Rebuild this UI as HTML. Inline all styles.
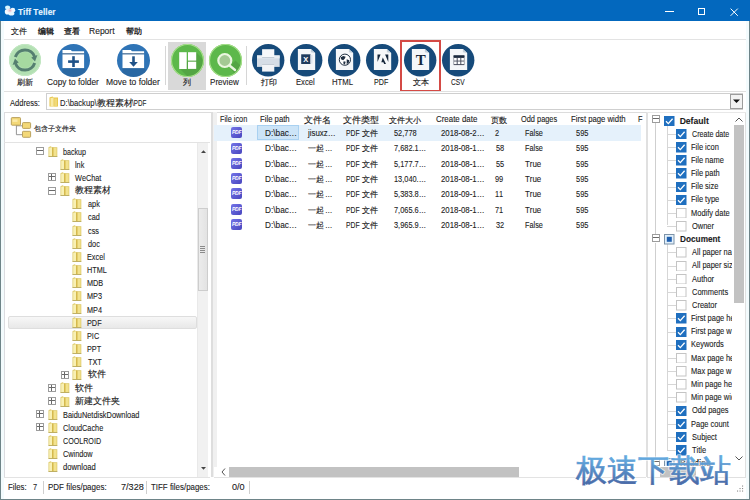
<!DOCTYPE html><html><head><meta charset="utf-8"><style>
*{margin:0;padding:0;box-sizing:border-box}
html,body{width:750px;height:500px;overflow:hidden;background:#fff;font-family:"Liberation Sans",sans-serif}
.ab{position:absolute}
.t{position:absolute;white-space:nowrap;line-height:10px;transform-origin:0 0;font-kerning:none;-webkit-text-stroke:0.1px currentColor}
</style></head><body>
<div class="ab" style="left:0;top:0;width:750px;height:21px;background:#0368be"></div>
<svg class="ab" style="left:4px;top:5px" width="12" height="11" viewBox="0 0 12 11"><ellipse cx="3.6" cy="2.6" rx="2.6" ry="2" fill="#d8f6ff"/><ellipse cx="8.8" cy="5.2" rx="2.4" ry="2.4" fill="#eef8ff"/><ellipse cx="3.4" cy="6.8" rx="2.6" ry="2.8" fill="#f4fbff"/><ellipse cx="7.4" cy="8.4" rx="3" ry="2" fill="#e6f8ff"/><ellipse cx="5.8" cy="5.4" rx="2.4" ry="2" fill="#f2dfe8"/><ellipse cx="6" cy="5.6" rx="1.2" ry="1" fill="#e3b9c8"/></svg>
<div class="t" style="left:18.32px;top:7px;font-size:8.6px;font-weight:bold;color:#e6f5ff;transform:scaleX(0.970);">Tiff Teller</div>
<div class="ab" style="left:665px;top:11px;width:9px;height:1px;background:#fff"></div>
<div class="ab" style="left:698px;top:8px;width:7px;height:7px;border:1px solid #fff"></div>
<svg class="ab" style="left:729.5px;top:7.5px" width="9" height="9" viewBox="0 0 9 9"><path d="M0.6 0.6 L7.8 7.8 M7.8 0.6 L0.6 7.8" stroke="#fff" stroke-width="1"/></svg>
<div class="ab" style="left:0;top:21px;width:1px;height:479px;background:#6e8488"></div>
<div class="ab" style="left:1px;top:21px;width:3px;height:478px;background:#f3fbfd"></div>
<div class="ab" style="left:746px;top:21px;width:3px;height:478px;background:#f3fbfd"></div>
<div class="ab" style="left:749px;top:21px;width:1px;height:479px;background:#6e8488"></div>
<div class="ab" style="left:0;top:499px;width:750px;height:1px;background:#6e8488"></div>
<div class="t" style="left:11.2px;top:27px;font-size:7.9px;color:#1c1c1c;-webkit-text-stroke:0.15px #1c1c1c;">文件</div>
<div class="t" style="left:37.5px;top:27px;font-size:8.1px;color:#1c1c1c;-webkit-text-stroke:0.15px #1c1c1c;-webkit-text-stroke:0.32px #1c1c1c">编辑</div>
<div class="t" style="left:64.2px;top:27px;font-size:7.9px;color:#1c1c1c;-webkit-text-stroke:0.15px #1c1c1c;-webkit-text-stroke:0.32px #1c1c1c">查看</div>
<div class="t" style="left:89.32px;top:26px;font-size:8.6px;color:#1c1c1c;transform:scaleX(0.990);">Report</div>
<div class="t" style="left:126px;top:27px;font-size:7.8px;color:#1c1c1c;-webkit-text-stroke:0.15px #1c1c1c;-webkit-text-stroke:0.32px #1c1c1c">帮助</div>
<div class="ab" style="left:4px;top:39px;width:742px;height:1px;background:#e3e3e3"></div>
<div class="ab" style="left:165px;top:46px;width:1px;height:39px;background:#d6d6d6"></div>
<div class="ab" style="left:245.5px;top:46px;width:1px;height:39px;background:#d6d6d6"></div>
<div class="ab" style="left:168px;top:42px;width:38px;height:48px;background:#d9d9d9"></div>
<div class="ab" style="left:400px;top:40px;width:41px;height:52px;border:2px solid #d44a45"></div>
<svg class="ab" style="left:7.800000000000001px;top:42.8px" width="34" height="34" viewBox="-17 -17 34 34"><defs><clipPath id="cc1"><circle cx="0" cy="0" r="16"/></clipPath></defs><circle cx="0" cy="0" r="16" fill="#b3e0b3"/><circle r="15.6" fill="#b3e0b3" stroke="#c6e9c6" stroke-width="0.8"/><circle r="8" fill="#a6d9a0"/><path d="M-9.66 -2.95 A10.1 10.1 0 0 1 9.61 -3.12" fill="none" stroke="#557f70" stroke-width="3.0"/><path d="M9.66 2.95 A10.1 10.1 0 0 1 -9.61 3.12" fill="none" stroke="#557f70" stroke-width="3.0"/><path d="M12.42 -5.02 L6.30 -2.55 L10.00 1.41Z" fill="#557f70"/><path d="M-12.42 5.02 L-6.30 2.55 L-10.00 -1.41Z" fill="#557f70"/></svg>
<svg class="ab" style="left:55.5px;top:42.5px" width="35.0" height="35.0" viewBox="-17.5 -17.5 35.0 35.0"><defs><clipPath id="cc2"><circle cx="0" cy="0" r="16.5"/></clipPath></defs><circle cx="0" cy="0" r="16.5" fill="#2f74b6"/><g clip-path="url(#cc2)"><path d="M-11 7.6 L10.6 7.6 L20 20 L-11 20Z" fill="rgba(0,0,0,0.10)"/></g><path d="M-11 -10.4 L-2.6 -10.4 L-1.6 -9.2 L10.6 -9.2 L10.6 -7.2 L-11 -7.2Z" fill="#fff"/><rect x="-11" y="-7.2" width="21.6" height="1.2" fill="#6d8299"/><rect x="-11" y="-6" width="21.6" height="13.6" fill="#fff"/><rect x="-5.4" y="-0.2" width="10.8" height="2.6" fill="#1f5288"/><rect x="-1.3" y="-4.3" width="2.6" height="10.8" fill="#1f5288"/></svg>
<svg class="ab" style="left:115.5px;top:42.5px" width="35.0" height="35.0" viewBox="-17.5 -17.5 35.0 35.0"><defs><clipPath id="cc3"><circle cx="0" cy="0" r="16.5"/></clipPath></defs><circle cx="0" cy="0" r="16.5" fill="#2f74b6"/><g clip-path="url(#cc3)"><path d="M-11 7.6 L10.6 7.6 L20 20 L-11 20Z" fill="rgba(0,0,0,0.10)"/></g><path d="M-11 -10.4 L-2.6 -10.4 L-1.6 -9.2 L10.6 -9.2 L10.6 -7.2 L-11 -7.2Z" fill="#fff"/><rect x="-11" y="-7.2" width="21.6" height="1.2" fill="#6d8299"/><rect x="-11" y="-6" width="21.6" height="13.6" fill="#fff"/><rect x="-1.3" y="-4.2" width="2.6" height="6" fill="#1f5288"/><path d="M-4.3 1.5 L4.3 1.5 L0 6.2Z" fill="#1f5288"/></svg>
<svg class="ab" style="left:169.8px;top:42.5px" width="35.0" height="35.0" viewBox="-17.5 -17.5 35.0 35.0"><defs><clipPath id="cc4"><circle cx="0" cy="0" r="16.5"/></clipPath></defs><circle cx="0" cy="0" r="16.5" fill="#5db84b"/><g clip-path="url(#cc4)"><path d="M-8 8 L9 -8 L30 14 L14 30Z" fill="rgba(0,0,0,0.10)"/></g><circle r="16" fill="none" stroke="#a8e08c" stroke-width="1.2"/><rect x="-8.3" y="-8.3" width="7.5" height="16.8" fill="#fff"/><rect x="0.5" y="-8.3" width="8.2" height="8.4" fill="#fff"/><rect x="0.5" y="1.2" width="8.2" height="7.2" fill="#fff"/></svg>
<svg class="ab" style="left:208.0px;top:42.5px" width="35.0" height="35.0" viewBox="-17.5 -17.5 35.0 35.0"><defs><clipPath id="cc5"><circle cx="0" cy="0" r="16.5"/></clipPath></defs><circle cx="0" cy="0" r="16.5" fill="#5db84b"/><g clip-path="url(#cc5)"><path d="M4 6 L10 0 L30 20 L20 30Z" fill="rgba(0,0,0,0.10)"/></g><circle r="16" fill="none" stroke="#a8e08c" stroke-width="1.2"/><circle cx="-0.7" cy="0" r="6.5" fill="#a4c994" stroke="#eaf6df" stroke-width="2.2"/><path d="M4 5 L9.5 9.5" stroke="#eaf6df" stroke-width="2.4" stroke-linecap="round"/></svg>
<svg class="ab" style="left:250.8px;top:42.599999999999994px" width="34.4" height="34.4" viewBox="-17.2 -17.2 34.4 34.4"><defs><clipPath id="cc6"><circle cx="0" cy="0" r="16.2"/></clipPath></defs><circle cx="0" cy="0" r="16.2" fill="#164a7a"/><rect x="-11.2" y="-4.8" width="22.7" height="11.5" fill="#d5dde6"/><rect x="-11.2" y="-4.8" width="22.7" height="3" fill="#e9eef3"/><rect x="-6.1" y="-11" width="12.2" height="8.7" fill="#f6f8fa"/><rect x="-6.1" y="-3" width="12.2" height="0.8" fill="#b8c2cc"/><rect x="-6.1" y="3.8" width="12.2" height="7.6" fill="#f2f4f7"/><rect x="-6.1" y="3.8" width="12.2" height="0.8" fill="#b8c2cc"/></svg>
<svg class="ab" style="left:288.8px;top:42.599999999999994px" width="34.4" height="34.4" viewBox="-17.2 -17.2 34.4 34.4"><defs><clipPath id="cc7"><circle cx="0" cy="0" r="16.2"/></clipPath></defs><circle cx="0" cy="0" r="16.2" fill="#164a7a"/><path d="M-8.3 -11.3 L4.7 -11.3 L9 -7.2 L9 9.9 L-8.3 9.9Z" fill="#f5f7f9"/><path d="M4.7 -11.3 L4.7 -8 L9 -7.2Z" fill="#c5d0da"/><rect x="-5" y="-5.9" width="9.3" height="9.7" fill="#1f3b5d"/><rect x="4.3" y="-5.2" width="2" height="8.6" fill="#dfe6ee"/><text x="-0.4" y="1.8" font-size="7.5" font-family="Liberation Sans" font-weight="bold" fill="#fff" text-anchor="middle">X</text></svg>
<svg class="ab" style="left:326.8px;top:42.599999999999994px" width="34.4" height="34.4" viewBox="-17.2 -17.2 34.4 34.4"><defs><clipPath id="cc8"><circle cx="0" cy="0" r="16.2"/></clipPath></defs><circle cx="0" cy="0" r="16.2" fill="#164a7a"/><path d="M-8.3 -11.3 L4.7 -11.3 L9 -7.2 L9 9.9 L-8.3 9.9Z" fill="#f5f7f9"/><path d="M4.7 -11.3 L4.7 -8 L9 -7.2Z" fill="#c5d0da"/><circle cx="0.7" cy="-0.5" r="5.6" fill="#fff" stroke="#1e2e40" stroke-width="1"/><path d="M-3.5 -3 L-1 -4.3 L1.5 -3.5 L0.5 -1.5 L-1 0 L-3.2 -1Z M-0.5 1 L1.5 1.5 L0.6 4.6 L-1 3Z M2.5 -1 L5 0 L4.6 2.5 L2.5 4Z" fill="#1e2e40"/></svg>
<svg class="ab" style="left:364.8px;top:42.599999999999994px" width="34.4" height="34.4" viewBox="-17.2 -17.2 34.4 34.4"><defs><clipPath id="cc9"><circle cx="0" cy="0" r="16.2"/></clipPath></defs><circle cx="0" cy="0" r="16.2" fill="#164a7a"/><path d="M-8.3 -11.3 L4.7 -11.3 L9 -7.2 L9 9.9 L-8.3 9.9Z" fill="#f5f7f9"/><path d="M4.7 -11.3 L4.7 -8 L9 -7.2Z" fill="#c5d0da"/><path d="M-4.7 -5.6 L-1.6 -5.6 L-4.7 1.8Z M2.9 -5.6 L6.1 -5.6 L6.1 1.8Z M0.6 -2.8 L3.8 3.8 L1.9 3.8 L1.2 2 L-0.9 2Z" fill="#15263a"/></svg>
<svg class="ab" style="left:403.3px;top:42.599999999999994px" width="34.4" height="34.4" viewBox="-17.2 -17.2 34.4 34.4"><defs><clipPath id="cc10"><circle cx="0" cy="0" r="16.2"/></clipPath></defs><circle cx="0" cy="0" r="16.2" fill="#164a7a"/><path d="M-8.3 -11.3 L4.7 -11.3 L9 -7.2 L9 9.9 L-8.3 9.9Z" fill="#f5f7f9"/><path d="M4.7 -11.3 L4.7 -8 L9 -7.2Z" fill="#c5d0da"/><text x="0.5" y="4.6" font-size="15" font-family="Liberation Serif" font-weight="bold" fill="#15263a" text-anchor="middle">T</text></svg>
<svg class="ab" style="left:441.40000000000003px;top:42.599999999999994px" width="34.4" height="34.4" viewBox="-17.2 -17.2 34.4 34.4"><defs><clipPath id="cc11"><circle cx="0" cy="0" r="16.2"/></clipPath></defs><circle cx="0" cy="0" r="16.2" fill="#164a7a"/><path d="M-8.3 -11.3 L4.7 -11.3 L9 -7.2 L9 9.9 L-8.3 9.9Z" fill="#f5f7f9"/><path d="M4.7 -11.3 L4.7 -8 L9 -7.2Z" fill="#c5d0da"/><rect x="-4.6" y="-4.8" width="10.8" height="9.7" fill="#4a4f5e"/><rect x="-4.6" y="-4.8" width="10.8" height="2" fill="#1b2b40"/><rect x="-4.1" y="-2.2" width="2.6" height="2.6" fill="#fff"/><rect x="-4.1" y="1.3" width="2.6" height="2.6" fill="#fff"/><rect x="-0.5" y="-2.2" width="2.6" height="2.6" fill="#fff"/><rect x="-0.5" y="1.3" width="2.6" height="2.6" fill="#fff"/><rect x="3.1" y="-2.2" width="2.6" height="2.6" fill="#fff"/><rect x="3.1" y="1.3" width="2.6" height="2.6" fill="#fff"/></svg>
<div class="t" style="left:17px;top:78px;font-size:7.7px;color:#1c1c1c;-webkit-text-stroke:0.15px #1c1c1c;">刷新</div>
<div class="t" style="left:46.78px;top:77px;font-size:8.6px;color:#1c1c1c;transform:scaleX(0.970);">Copy to folder</div>
<div class="t" style="left:106.32px;top:77px;font-size:8.6px;color:#1c1c1c;transform:scaleX(0.990);">Move to folder</div>
<div class="t" style="left:183px;top:78px;font-size:8px;color:#1c1c1c;-webkit-text-stroke:0.15px #1c1c1c;">列</div>
<div class="t" style="left:210.36px;top:77px;font-size:8.6px;color:#1c1c1c;transform:scaleX(0.940);">Preview</div>
<div class="t" style="left:260.5px;top:78px;font-size:7.9px;color:#1c1c1c;-webkit-text-stroke:0.15px #1c1c1c;">打印</div>
<div class="t" style="left:296.38px;top:77px;font-size:8.6px;color:#1c1c1c;transform:scaleX(0.890);">Excel</div>
<div class="t" style="left:332.38px;top:77px;font-size:8.6px;color:#1c1c1c;transform:scaleX(0.900);">HTML</div>
<div class="t" style="left:374.43px;top:77px;font-size:8.6px;color:#1c1c1c;transform:scaleX(0.830);">PDF</div>
<div class="t" style="left:413px;top:78px;font-size:7.9px;color:#1c1c1c;-webkit-text-stroke:0.15px #1c1c1c;">文本</div>
<div class="t" style="left:451.17px;top:77px;font-size:8.6px;color:#1c1c1c;transform:scaleX(0.770);">CSV</div>
<div class="ab" style="left:4px;top:91px;width:742px;height:1px;background:#e0e0e0"></div>
<div class="t" style="left:9.6px;top:98px;font-size:8.6px;color:#1c1c1c;transform:scaleX(0.880);">Address:</div>
<div class="ab" style="left:46px;top:93px;width:697px;height:16.5px;border:1px solid #cfcfcf;background:#fff"></div>
<div class="ab" style="left:730px;top:94px;width:12.5px;height:15px;border:1px solid #9c9c9c;background:#f2f2f2"></div>
<svg class="ab" style="left:733px;top:99px" width="7" height="5"><path d="M0 0.5 L7 0.5 L3.5 4Z" fill="#111"/></svg>
<svg class="ab" style="left:48.5px;top:96px" width="10" height="11" viewBox="0 0 10 11"><path d="M0.5 1.5 L3.5 0.5 L4.5 1.5 L9 1.5 L9 10.5 L0.5 10.5Z" fill="#e6c447"/><path d="M1.5 2 L4.6 1.4 L4.6 10.5 L1.5 10.5Z" fill="#f8eaa6"/><path d="M5.2 2.5 L8.2 2.5 L8.2 10.5 L5.2 10.5Z" fill="#f0d978"/></svg>
<div class="t" style="left:60.19px;top:98px;font-size:8.6px;color:#1c1c1c;transform:scaleX(0.890);">D:\backup\</div>
<div class="t" style="left:97.3px;top:98px;font-size:8.5px;color:#1c1c1c;-webkit-text-stroke:0.15px #1c1c1c;">教程素材</div>
<div class="t" style="left:132.3px;top:98px;font-size:8.6px;color:#1c1c1c;transform:scaleX(0.730);">\PDF</div>
<div class="ab" style="left:4px;top:111.5px;width:742px;height:1px;background:#dcdcdc"></div>
<div class="ab" style="left:4px;top:112px;width:1px;height:365px;background:#dcdce0"></div>
<div class="ab" style="left:4px;top:141.5px;width:206px;height:1px;background:#e3e3e3"></div>
<svg class="ab" style="left:10px;top:116px" width="23" height="23" viewBox="0 0 23 23"><path d="M6.4 9.2 V18.7 H12.3 M6.4 9.8 H12.3" stroke="#8a8a8a" stroke-width="0.9" fill="none"/><rect x="1.3" y="1.6" width="9.2" height="7.6" rx="0.8" fill="#f3d878" stroke="#b39a55" stroke-width="0.9"/><rect x="2.5" y="3.4" width="5" height="2.5" fill="#fbeaa8"/><rect x="12.5" y="6.6" width="8.1" height="5.8" rx="0.8" fill="#f3d878" stroke="#b39a55" stroke-width="0.9"/><rect x="12.5" y="15.3" width="8.1" height="6" rx="0.8" fill="#f3d878" stroke="#b39a55" stroke-width="0.9"/></svg>
<div class="t" style="left:34.4px;top:124px;font-size:7.3px;color:#1c1c1c;-webkit-text-stroke:0.15px #1c1c1c;">包含子文件夹</div>
<div class="ab" style="left:7.5px;top:315.88px;width:189px;height:13px;border-radius:2px;background:linear-gradient(#f7f7f7,#e8e8e8);border:1px solid #dedede"></div>
<svg class="ab" style="left:36px;top:147px" width="8" height="8" viewBox="0 0 8 8"><rect x="0.5" y="0.5" width="7" height="7" fill="#fff" stroke="#9c9c9c"/><path d="M1 3.5 H7" stroke="#6a6a6a"/></svg>
<svg class="ab" style="left:47.8px;top:145.5px" width="10" height="11" viewBox="0 0 10 11"><path d="M0.5 1.2 L2.6 0.3 L4.2 1.2 L9.3 1.2 L9.3 10.8 L0.5 10.8Z" fill="#dcc766"/><path d="M1.2 1.8 L4.3 1.2 L4.3 10.2 L1.2 10.2Z" fill="#f8f0b4"/><path d="M5.3 2 L8.6 2 L8.6 10.2 L5.3 10.2Z" fill="#f2e28e"/><path d="M4.3 1.2 L5.3 1.6 L5.3 10.3 L4.3 10.3Z" fill="#cfae3a"/><path d="M0.5 10 L9.3 10 L9.3 10.8 L0.5 10.8Z" fill="#b5a65c"/></svg>
<div class="t" style="left:62.73px;top:147px;font-size:8.6px;color:#1c1c1c;transform:scaleX(0.830);">backup</div>
<svg class="ab" style="left:60.1px;top:158.7px" width="10" height="11" viewBox="0 0 10 11"><path d="M0.5 1.2 L2.6 0.3 L4.2 1.2 L9.3 1.2 L9.3 10.8 L0.5 10.8Z" fill="#dcc766"/><path d="M1.2 1.8 L4.3 1.2 L4.3 10.2 L1.2 10.2Z" fill="#f8f0b4"/><path d="M5.3 2 L8.6 2 L8.6 10.2 L5.3 10.2Z" fill="#f2e28e"/><path d="M4.3 1.2 L5.3 1.6 L5.3 10.3 L4.3 10.3Z" fill="#cfae3a"/><path d="M0.5 10 L9.3 10 L9.3 10.8 L0.5 10.8Z" fill="#b5a65c"/></svg>
<div class="t" style="left:75.02px;top:160px;font-size:8.6px;color:#1c1c1c;transform:scaleX(0.850);">lnk</div>
<svg class="ab" style="left:48px;top:173px" width="8" height="8" viewBox="0 0 8 8"><rect x="0.5" y="0.5" width="7" height="7" fill="#fff" stroke="#9c9c9c"/><path d="M1 3.5 H7" stroke="#6a6a6a"/><path d="M3.5 1 V7" stroke="#6a6a6a"/></svg>
<svg class="ab" style="left:60.1px;top:171.8px" width="10" height="11" viewBox="0 0 10 11"><path d="M0.5 1.2 L2.6 0.3 L4.2 1.2 L9.3 1.2 L9.3 10.8 L0.5 10.8Z" fill="#dcc766"/><path d="M1.2 1.8 L4.3 1.2 L4.3 10.2 L1.2 10.2Z" fill="#f8f0b4"/><path d="M5.3 2 L8.6 2 L8.6 10.2 L5.3 10.2Z" fill="#f2e28e"/><path d="M4.3 1.2 L5.3 1.6 L5.3 10.3 L4.3 10.3Z" fill="#cfae3a"/><path d="M0.5 10 L9.3 10 L9.3 10.8 L0.5 10.8Z" fill="#b5a65c"/></svg>
<div class="t" style="left:75.46px;top:173px;font-size:8.6px;color:#1c1c1c;transform:scaleX(0.850);">WeChat</div>
<svg class="ab" style="left:48px;top:187px" width="8" height="8" viewBox="0 0 8 8"><rect x="0.5" y="0.5" width="7" height="7" fill="#fff" stroke="#9c9c9c"/><path d="M1 3.5 H7" stroke="#6a6a6a"/></svg>
<svg class="ab" style="left:60.1px;top:185.0px" width="10" height="11" viewBox="0 0 10 11"><path d="M0.5 1.2 L2.6 0.3 L4.2 1.2 L9.3 1.2 L9.3 10.8 L0.5 10.8Z" fill="#dcc766"/><path d="M1.2 1.8 L4.3 1.2 L4.3 10.2 L1.2 10.2Z" fill="#f8f0b4"/><path d="M5.3 2 L8.6 2 L8.6 10.2 L5.3 10.2Z" fill="#f2e28e"/><path d="M4.3 1.2 L5.3 1.6 L5.3 10.3 L4.3 10.3Z" fill="#cfae3a"/><path d="M0.5 10 L9.3 10 L9.3 10.8 L0.5 10.8Z" fill="#b5a65c"/></svg>
<div class="t" style="left:75.3px;top:185px;font-size:8.5px;color:#1c1c1c;-webkit-text-stroke:0.15px #1c1c1c;">教程素材</div>
<svg class="ab" style="left:72.4px;top:198.1px" width="10" height="11" viewBox="0 0 10 11"><path d="M0.5 1.2 L2.6 0.3 L4.2 1.2 L9.3 1.2 L9.3 10.8 L0.5 10.8Z" fill="#dcc766"/><path d="M1.2 1.8 L4.3 1.2 L4.3 10.2 L1.2 10.2Z" fill="#f8f0b4"/><path d="M5.3 2 L8.6 2 L8.6 10.2 L5.3 10.2Z" fill="#f2e28e"/><path d="M4.3 1.2 L5.3 1.6 L5.3 10.3 L4.3 10.3Z" fill="#cfae3a"/><path d="M0.5 10 L9.3 10 L9.3 10.8 L0.5 10.8Z" fill="#b5a65c"/></svg>
<div class="t" style="left:87.51px;top:199px;font-size:8.6px;color:#1c1c1c;transform:scaleX(0.850);">apk</div>
<svg class="ab" style="left:72.4px;top:211.3px" width="10" height="11" viewBox="0 0 10 11"><path d="M0.5 1.2 L2.6 0.3 L4.2 1.2 L9.3 1.2 L9.3 10.8 L0.5 10.8Z" fill="#dcc766"/><path d="M1.2 1.8 L4.3 1.2 L4.3 10.2 L1.2 10.2Z" fill="#f8f0b4"/><path d="M5.3 2 L8.6 2 L8.6 10.2 L5.3 10.2Z" fill="#f2e28e"/><path d="M4.3 1.2 L5.3 1.6 L5.3 10.3 L4.3 10.3Z" fill="#cfae3a"/><path d="M0.5 10 L9.3 10 L9.3 10.8 L0.5 10.8Z" fill="#b5a65c"/></svg>
<div class="t" style="left:87.51px;top:212px;font-size:8.6px;color:#1c1c1c;transform:scaleX(0.850);">cad</div>
<svg class="ab" style="left:72.4px;top:224.5px" width="10" height="11" viewBox="0 0 10 11"><path d="M0.5 1.2 L2.6 0.3 L4.2 1.2 L9.3 1.2 L9.3 10.8 L0.5 10.8Z" fill="#dcc766"/><path d="M1.2 1.8 L4.3 1.2 L4.3 10.2 L1.2 10.2Z" fill="#f8f0b4"/><path d="M5.3 2 L8.6 2 L8.6 10.2 L5.3 10.2Z" fill="#f2e28e"/><path d="M4.3 1.2 L5.3 1.6 L5.3 10.3 L4.3 10.3Z" fill="#cfae3a"/><path d="M0.5 10 L9.3 10 L9.3 10.8 L0.5 10.8Z" fill="#b5a65c"/></svg>
<div class="t" style="left:87.51px;top:226px;font-size:8.6px;color:#1c1c1c;transform:scaleX(0.850);">css</div>
<svg class="ab" style="left:72.4px;top:237.6px" width="10" height="11" viewBox="0 0 10 11"><path d="M0.5 1.2 L2.6 0.3 L4.2 1.2 L9.3 1.2 L9.3 10.8 L0.5 10.8Z" fill="#dcc766"/><path d="M1.2 1.8 L4.3 1.2 L4.3 10.2 L1.2 10.2Z" fill="#f8f0b4"/><path d="M5.3 2 L8.6 2 L8.6 10.2 L5.3 10.2Z" fill="#f2e28e"/><path d="M4.3 1.2 L5.3 1.6 L5.3 10.3 L4.3 10.3Z" fill="#cfae3a"/><path d="M0.5 10 L9.3 10 L9.3 10.8 L0.5 10.8Z" fill="#b5a65c"/></svg>
<div class="t" style="left:87.51px;top:239px;font-size:8.6px;color:#1c1c1c;transform:scaleX(0.850);">doc</div>
<svg class="ab" style="left:72.4px;top:250.8px" width="10" height="11" viewBox="0 0 10 11"><path d="M0.5 1.2 L2.6 0.3 L4.2 1.2 L9.3 1.2 L9.3 10.8 L0.5 10.8Z" fill="#dcc766"/><path d="M1.2 1.8 L4.3 1.2 L4.3 10.2 L1.2 10.2Z" fill="#f8f0b4"/><path d="M5.3 2 L8.6 2 L8.6 10.2 L5.3 10.2Z" fill="#f2e28e"/><path d="M4.3 1.2 L5.3 1.6 L5.3 10.3 L4.3 10.3Z" fill="#cfae3a"/><path d="M0.5 10 L9.3 10 L9.3 10.8 L0.5 10.8Z" fill="#b5a65c"/></svg>
<div class="t" style="left:87.22px;top:252px;font-size:8.6px;color:#1c1c1c;transform:scaleX(0.850);">Excel</div>
<svg class="ab" style="left:72.4px;top:263.9px" width="10" height="11" viewBox="0 0 10 11"><path d="M0.5 1.2 L2.6 0.3 L4.2 1.2 L9.3 1.2 L9.3 10.8 L0.5 10.8Z" fill="#dcc766"/><path d="M1.2 1.8 L4.3 1.2 L4.3 10.2 L1.2 10.2Z" fill="#f8f0b4"/><path d="M5.3 2 L8.6 2 L8.6 10.2 L5.3 10.2Z" fill="#f2e28e"/><path d="M4.3 1.2 L5.3 1.6 L5.3 10.3 L4.3 10.3Z" fill="#cfae3a"/><path d="M0.5 10 L9.3 10 L9.3 10.8 L0.5 10.8Z" fill="#b5a65c"/></svg>
<div class="t" style="left:87.22px;top:265px;font-size:8.6px;color:#1c1c1c;transform:scaleX(0.850);">HTML</div>
<svg class="ab" style="left:72.4px;top:277.1px" width="10" height="11" viewBox="0 0 10 11"><path d="M0.5 1.2 L2.6 0.3 L4.2 1.2 L9.3 1.2 L9.3 10.8 L0.5 10.8Z" fill="#dcc766"/><path d="M1.2 1.8 L4.3 1.2 L4.3 10.2 L1.2 10.2Z" fill="#f8f0b4"/><path d="M5.3 2 L8.6 2 L8.6 10.2 L5.3 10.2Z" fill="#f2e28e"/><path d="M4.3 1.2 L5.3 1.6 L5.3 10.3 L4.3 10.3Z" fill="#cfae3a"/><path d="M0.5 10 L9.3 10 L9.3 10.8 L0.5 10.8Z" fill="#b5a65c"/></svg>
<div class="t" style="left:87.22px;top:278px;font-size:8.6px;color:#1c1c1c;transform:scaleX(0.850);">MDB</div>
<svg class="ab" style="left:72.4px;top:290.3px" width="10" height="11" viewBox="0 0 10 11"><path d="M0.5 1.2 L2.6 0.3 L4.2 1.2 L9.3 1.2 L9.3 10.8 L0.5 10.8Z" fill="#dcc766"/><path d="M1.2 1.8 L4.3 1.2 L4.3 10.2 L1.2 10.2Z" fill="#f8f0b4"/><path d="M5.3 2 L8.6 2 L8.6 10.2 L5.3 10.2Z" fill="#f2e28e"/><path d="M4.3 1.2 L5.3 1.6 L5.3 10.3 L4.3 10.3Z" fill="#cfae3a"/><path d="M0.5 10 L9.3 10 L9.3 10.8 L0.5 10.8Z" fill="#b5a65c"/></svg>
<div class="t" style="left:87.22px;top:291px;font-size:8.6px;color:#1c1c1c;transform:scaleX(0.850);">MP3</div>
<svg class="ab" style="left:72.4px;top:303.4px" width="10" height="11" viewBox="0 0 10 11"><path d="M0.5 1.2 L2.6 0.3 L4.2 1.2 L9.3 1.2 L9.3 10.8 L0.5 10.8Z" fill="#dcc766"/><path d="M1.2 1.8 L4.3 1.2 L4.3 10.2 L1.2 10.2Z" fill="#f8f0b4"/><path d="M5.3 2 L8.6 2 L8.6 10.2 L5.3 10.2Z" fill="#f2e28e"/><path d="M4.3 1.2 L5.3 1.6 L5.3 10.3 L4.3 10.3Z" fill="#cfae3a"/><path d="M0.5 10 L9.3 10 L9.3 10.8 L0.5 10.8Z" fill="#b5a65c"/></svg>
<div class="t" style="left:87.22px;top:305px;font-size:8.6px;color:#1c1c1c;transform:scaleX(0.850);">MP4</div>
<svg class="ab" style="left:72.4px;top:316.6px" width="10" height="11" viewBox="0 0 10 11"><path d="M0.5 1.2 L2.6 0.3 L4.2 1.2 L9.3 1.2 L9.3 10.8 L0.5 10.8Z" fill="#dcc766"/><path d="M1.2 1.8 L4.3 1.2 L4.3 10.2 L1.2 10.2Z" fill="#f8f0b4"/><path d="M5.3 2 L8.6 2 L8.6 10.2 L5.3 10.2Z" fill="#f2e28e"/><path d="M4.3 1.2 L5.3 1.6 L5.3 10.3 L4.3 10.3Z" fill="#cfae3a"/><path d="M0.5 10 L9.3 10 L9.3 10.8 L0.5 10.8Z" fill="#b5a65c"/></svg>
<div class="t" style="left:87.22px;top:318px;font-size:8.6px;color:#1c1c1c;transform:scaleX(0.850);">PDF</div>
<svg class="ab" style="left:72.4px;top:329.7px" width="10" height="11" viewBox="0 0 10 11"><path d="M0.5 1.2 L2.6 0.3 L4.2 1.2 L9.3 1.2 L9.3 10.8 L0.5 10.8Z" fill="#dcc766"/><path d="M1.2 1.8 L4.3 1.2 L4.3 10.2 L1.2 10.2Z" fill="#f8f0b4"/><path d="M5.3 2 L8.6 2 L8.6 10.2 L5.3 10.2Z" fill="#f2e28e"/><path d="M4.3 1.2 L5.3 1.6 L5.3 10.3 L4.3 10.3Z" fill="#cfae3a"/><path d="M0.5 10 L9.3 10 L9.3 10.8 L0.5 10.8Z" fill="#b5a65c"/></svg>
<div class="t" style="left:87.22px;top:331px;font-size:8.6px;color:#1c1c1c;transform:scaleX(0.850);">PIC</div>
<svg class="ab" style="left:72.4px;top:342.9px" width="10" height="11" viewBox="0 0 10 11"><path d="M0.5 1.2 L2.6 0.3 L4.2 1.2 L9.3 1.2 L9.3 10.8 L0.5 10.8Z" fill="#dcc766"/><path d="M1.2 1.8 L4.3 1.2 L4.3 10.2 L1.2 10.2Z" fill="#f8f0b4"/><path d="M5.3 2 L8.6 2 L8.6 10.2 L5.3 10.2Z" fill="#f2e28e"/><path d="M4.3 1.2 L5.3 1.6 L5.3 10.3 L4.3 10.3Z" fill="#cfae3a"/><path d="M0.5 10 L9.3 10 L9.3 10.8 L0.5 10.8Z" fill="#b5a65c"/></svg>
<div class="t" style="left:87.22px;top:344px;font-size:8.6px;color:#1c1c1c;transform:scaleX(0.850);">PPT</div>
<svg class="ab" style="left:72.4px;top:356.1px" width="10" height="11" viewBox="0 0 10 11"><path d="M0.5 1.2 L2.6 0.3 L4.2 1.2 L9.3 1.2 L9.3 10.8 L0.5 10.8Z" fill="#dcc766"/><path d="M1.2 1.8 L4.3 1.2 L4.3 10.2 L1.2 10.2Z" fill="#f8f0b4"/><path d="M5.3 2 L8.6 2 L8.6 10.2 L5.3 10.2Z" fill="#f2e28e"/><path d="M4.3 1.2 L5.3 1.6 L5.3 10.3 L4.3 10.3Z" fill="#cfae3a"/><path d="M0.5 10 L9.3 10 L9.3 10.8 L0.5 10.8Z" fill="#b5a65c"/></svg>
<div class="t" style="left:87.65px;top:357px;font-size:8.6px;color:#1c1c1c;transform:scaleX(0.850);">TXT</div>
<svg class="ab" style="left:61px;top:371px" width="8" height="8" viewBox="0 0 8 8"><rect x="0.5" y="0.5" width="7" height="7" fill="#fff" stroke="#9c9c9c"/><path d="M1 3.5 H7" stroke="#6a6a6a"/><path d="M3.5 1 V7" stroke="#6a6a6a"/></svg>
<svg class="ab" style="left:72.4px;top:369.2px" width="10" height="11" viewBox="0 0 10 11"><path d="M0.5 1.2 L2.6 0.3 L4.2 1.2 L9.3 1.2 L9.3 10.8 L0.5 10.8Z" fill="#dcc766"/><path d="M1.2 1.8 L4.3 1.2 L4.3 10.2 L1.2 10.2Z" fill="#f8f0b4"/><path d="M5.3 2 L8.6 2 L8.6 10.2 L5.3 10.2Z" fill="#f2e28e"/><path d="M4.3 1.2 L5.3 1.6 L5.3 10.3 L4.3 10.3Z" fill="#cfae3a"/><path d="M0.5 10 L9.3 10 L9.3 10.8 L0.5 10.8Z" fill="#b5a65c"/></svg>
<div class="t" style="left:87.6px;top:369px;font-size:8.5px;color:#1c1c1c;-webkit-text-stroke:0.15px #1c1c1c;">软件</div>
<svg class="ab" style="left:48px;top:384px" width="8" height="8" viewBox="0 0 8 8"><rect x="0.5" y="0.5" width="7" height="7" fill="#fff" stroke="#9c9c9c"/><path d="M1 3.5 H7" stroke="#6a6a6a"/><path d="M3.5 1 V7" stroke="#6a6a6a"/></svg>
<svg class="ab" style="left:60.1px;top:382.4px" width="10" height="11" viewBox="0 0 10 11"><path d="M0.5 1.2 L2.6 0.3 L4.2 1.2 L9.3 1.2 L9.3 10.8 L0.5 10.8Z" fill="#dcc766"/><path d="M1.2 1.8 L4.3 1.2 L4.3 10.2 L1.2 10.2Z" fill="#f8f0b4"/><path d="M5.3 2 L8.6 2 L8.6 10.2 L5.3 10.2Z" fill="#f2e28e"/><path d="M4.3 1.2 L5.3 1.6 L5.3 10.3 L4.3 10.3Z" fill="#cfae3a"/><path d="M0.5 10 L9.3 10 L9.3 10.8 L0.5 10.8Z" fill="#b5a65c"/></svg>
<div class="t" style="left:75.3px;top:383px;font-size:8.5px;color:#1c1c1c;-webkit-text-stroke:0.15px #1c1c1c;">软件</div>
<svg class="ab" style="left:48px;top:397px" width="8" height="8" viewBox="0 0 8 8"><rect x="0.5" y="0.5" width="7" height="7" fill="#fff" stroke="#9c9c9c"/><path d="M1 3.5 H7" stroke="#6a6a6a"/><path d="M3.5 1 V7" stroke="#6a6a6a"/></svg>
<svg class="ab" style="left:60.1px;top:395.5px" width="10" height="11" viewBox="0 0 10 11"><path d="M0.5 1.2 L2.6 0.3 L4.2 1.2 L9.3 1.2 L9.3 10.8 L0.5 10.8Z" fill="#dcc766"/><path d="M1.2 1.8 L4.3 1.2 L4.3 10.2 L1.2 10.2Z" fill="#f8f0b4"/><path d="M5.3 2 L8.6 2 L8.6 10.2 L5.3 10.2Z" fill="#f2e28e"/><path d="M4.3 1.2 L5.3 1.6 L5.3 10.3 L4.3 10.3Z" fill="#cfae3a"/><path d="M0.5 10 L9.3 10 L9.3 10.8 L0.5 10.8Z" fill="#b5a65c"/></svg>
<div class="t" style="left:75.3px;top:396px;font-size:8.5px;color:#1c1c1c;-webkit-text-stroke:0.15px #1c1c1c;">新建文件夹</div>
<svg class="ab" style="left:36px;top:410px" width="8" height="8" viewBox="0 0 8 8"><rect x="0.5" y="0.5" width="7" height="7" fill="#fff" stroke="#9c9c9c"/><path d="M1 3.5 H7" stroke="#6a6a6a"/><path d="M3.5 1 V7" stroke="#6a6a6a"/></svg>
<svg class="ab" style="left:47.8px;top:408.7px" width="10" height="11" viewBox="0 0 10 11"><path d="M0.5 1.2 L2.6 0.3 L4.2 1.2 L9.3 1.2 L9.3 10.8 L0.5 10.8Z" fill="#dcc766"/><path d="M1.2 1.8 L4.3 1.2 L4.3 10.2 L1.2 10.2Z" fill="#f8f0b4"/><path d="M5.3 2 L8.6 2 L8.6 10.2 L5.3 10.2Z" fill="#f2e28e"/><path d="M4.3 1.2 L5.3 1.6 L5.3 10.3 L4.3 10.3Z" fill="#cfae3a"/><path d="M0.5 10 L9.3 10 L9.3 10.8 L0.5 10.8Z" fill="#b5a65c"/></svg>
<div class="t" style="left:62.61px;top:410px;font-size:8.6px;color:#1c1c1c;transform:scaleX(0.860);">BaiduNetdiskDownload</div>
<svg class="ab" style="left:36px;top:423px" width="8" height="8" viewBox="0 0 8 8"><rect x="0.5" y="0.5" width="7" height="7" fill="#fff" stroke="#9c9c9c"/><path d="M1 3.5 H7" stroke="#6a6a6a"/><path d="M3.5 1 V7" stroke="#6a6a6a"/></svg>
<svg class="ab" style="left:47.8px;top:421.9px" width="10" height="11" viewBox="0 0 10 11"><path d="M0.5 1.2 L2.6 0.3 L4.2 1.2 L9.3 1.2 L9.3 10.8 L0.5 10.8Z" fill="#dcc766"/><path d="M1.2 1.8 L4.3 1.2 L4.3 10.2 L1.2 10.2Z" fill="#f8f0b4"/><path d="M5.3 2 L8.6 2 L8.6 10.2 L5.3 10.2Z" fill="#f2e28e"/><path d="M4.3 1.2 L5.3 1.6 L5.3 10.3 L4.3 10.3Z" fill="#cfae3a"/><path d="M0.5 10 L9.3 10 L9.3 10.8 L0.5 10.8Z" fill="#b5a65c"/></svg>
<div class="t" style="left:62.83px;top:423px;font-size:8.6px;color:#1c1c1c;transform:scaleX(0.850);">CloudCache</div>
<svg class="ab" style="left:47.8px;top:435.0px" width="10" height="11" viewBox="0 0 10 11"><path d="M0.5 1.2 L2.6 0.3 L4.2 1.2 L9.3 1.2 L9.3 10.8 L0.5 10.8Z" fill="#dcc766"/><path d="M1.2 1.8 L4.3 1.2 L4.3 10.2 L1.2 10.2Z" fill="#f8f0b4"/><path d="M5.3 2 L8.6 2 L8.6 10.2 L5.3 10.2Z" fill="#f2e28e"/><path d="M4.3 1.2 L5.3 1.6 L5.3 10.3 L4.3 10.3Z" fill="#cfae3a"/><path d="M0.5 10 L9.3 10 L9.3 10.8 L0.5 10.8Z" fill="#b5a65c"/></svg>
<div class="t" style="left:62.84px;top:436px;font-size:8.6px;color:#1c1c1c;transform:scaleX(0.830);">COOLROID</div>
<svg class="ab" style="left:47.8px;top:448.2px" width="10" height="11" viewBox="0 0 10 11"><path d="M0.5 1.2 L2.6 0.3 L4.2 1.2 L9.3 1.2 L9.3 10.8 L0.5 10.8Z" fill="#dcc766"/><path d="M1.2 1.8 L4.3 1.2 L4.3 10.2 L1.2 10.2Z" fill="#f8f0b4"/><path d="M5.3 2 L8.6 2 L8.6 10.2 L5.3 10.2Z" fill="#f2e28e"/><path d="M4.3 1.2 L5.3 1.6 L5.3 10.3 L4.3 10.3Z" fill="#cfae3a"/><path d="M0.5 10 L9.3 10 L9.3 10.8 L0.5 10.8Z" fill="#b5a65c"/></svg>
<div class="t" style="left:62.83px;top:449px;font-size:8.6px;color:#1c1c1c;transform:scaleX(0.850);">Cwindow</div>
<svg class="ab" style="left:47.8px;top:461.3px" width="10" height="11" viewBox="0 0 10 11"><path d="M0.5 1.2 L2.6 0.3 L4.2 1.2 L9.3 1.2 L9.3 10.8 L0.5 10.8Z" fill="#dcc766"/><path d="M1.2 1.8 L4.3 1.2 L4.3 10.2 L1.2 10.2Z" fill="#f8f0b4"/><path d="M5.3 2 L8.6 2 L8.6 10.2 L5.3 10.2Z" fill="#f2e28e"/><path d="M4.3 1.2 L5.3 1.6 L5.3 10.3 L4.3 10.3Z" fill="#cfae3a"/><path d="M0.5 10 L9.3 10 L9.3 10.8 L0.5 10.8Z" fill="#b5a65c"/></svg>
<div class="t" style="left:62.89px;top:462px;font-size:8.6px;color:#1c1c1c;transform:scaleX(0.890);">download</div>
<div class="ab" style="left:197px;top:142.5px;width:11px;height:334px;background:#f1f1f1;border-left:1px solid #e9e9e9"></div>
<div class="ab" style="left:197.5px;top:207.5px;width:10.5px;height:83px;background:linear-gradient(90deg,#ececec,#e3e3e3);border:1px solid #cdcdcd"></div>
<svg class="ab" style="left:200px;top:149px" width="7" height="5"><path d="M1 4 L3.5 1.3 L6 4Z" fill="#444"/></svg>
<svg class="ab" style="left:200px;top:466px" width="7" height="5"><path d="M1 1 L3.5 3.7 L6 1Z" fill="#444"/></svg>
<div class="ab" style="left:200px;top:245.5px;width:5px;height:7px;background:repeating-linear-gradient(#8a8a8a 0 1px,transparent 1px 2px)"></div>
<div class="ab" style="left:4px;top:476.5px;width:206px;height:1px;background:#e3e3e3"></div>
<div class="ab" style="left:211px;top:112px;width:2px;height:365px;background:#dddddd"></div>
<div class="ab" style="left:213px;top:112px;width:4px;height:365px;background:#f0f0f0"></div>
<div class="ab" style="left:646px;top:112px;width:1px;height:365px;background:#e0e0e0"></div>
<div class="t" style="left:220.41px;top:114px;font-size:8.6px;color:#1c1c1c;transform:scaleX(0.850);">File icon</div>
<div class="t" style="left:260.38px;top:114px;font-size:8.6px;color:#1c1c1c;transform:scaleX(0.900);">File path</div>
<div class="t" style="left:303.6px;top:115px;font-size:8.7px;color:#1c1c1c;-webkit-text-stroke:0.15px #1c1c1c;">文件名</div>
<div class="t" style="left:342.6px;top:115px;font-size:8.6px;color:#1c1c1c;-webkit-text-stroke:0.15px #1c1c1c;">文件类型</div>
<div class="t" style="left:389.3px;top:115px;font-size:8.4px;color:#1c1c1c;-webkit-text-stroke:0.15px #1c1c1c;">文件大小</div>
<div class="t" style="left:436.21px;top:114px;font-size:8.6px;color:#1c1c1c;transform:scaleX(0.920);">Create date</div>
<div class="t" style="left:490.8px;top:115px;font-size:8.4px;color:#1c1c1c;-webkit-text-stroke:0.15px #1c1c1c;">页数</div>
<div class="t" style="left:521.47px;top:114px;font-size:8.6px;color:#1c1c1c;transform:scaleX(0.860);">Odd pages</div>
<div class="t" style="left:570.78px;top:114px;font-size:8.6px;color:#1c1c1c;transform:scaleX(0.900);">First page width</div>
<div class="t" style="left:638.01px;top:114px;font-size:8.6px;color:#1c1c1c;transform:scaleX(0.860);">F</div>
<div class="ab" style="left:214px;top:124.8px;width:427px;height:16px;background:#e5f1fb"></div>
<div class="ab" style="left:257px;top:125px;width:42px;height:15.3px;background:#cce4f7;border:1px solid #a9d1f1"></div>
<svg class="ab" style="left:231px;top:127.3px" width="11" height="11" viewBox="0 0 11 11"><defs><linearGradient id="pg0" x1="0" y1="0" x2="1" y2="1"><stop offset="0" stop-color="#7474e8"/><stop offset="1" stop-color="#4846be"/></linearGradient></defs><rect x="0" y="0" width="11" height="11" rx="2" fill="url(#pg0)"/><text x="5.6" y="7.2" font-size="5" font-family="Liberation Sans" font-weight="bold" font-style="italic" fill="#fff" text-anchor="middle" letter-spacing="-0.3">PDF</text></svg>
<div class="t" style="left:265.04px;top:128px;font-size:8.6px;color:#1c1c1c;transform:scaleX(0.960);">D:\bac…</div>
<div class="t" style="left:307.9px;top:128px;font-size:8.6px;color:#1c1c1c;transform:scaleX(0.920);">jisuxz…</div>
<div class="t" style="left:346.16px;top:128px;font-size:8.6px;color:#1c1c1c;transform:scaleX(0.790);">PDF</div>
<div class="t" style="left:362.2px;top:129px;font-size:8.1px;color:#1c1c1c;-webkit-text-stroke:0.15px #1c1c1c;">文件</div>
<div class="t" style="left:393.9px;top:128px;font-size:8.6px;color:#1c1c1c;transform:scaleX(0.860);">52,778</div>
<div class="t" style="left:441.01px;top:128px;font-size:8.6px;color:#1c1c1c;transform:scaleX(0.910);">2018-08-2…</div>
<div class="t" style="left:495.43px;top:128px;font-size:8.6px;color:#1c1c1c;transform:scaleX(0.860);">2</div>
<div class="t" style="left:525.01px;top:128px;font-size:8.6px;color:#1c1c1c;transform:scaleX(0.850);">False</div>
<div class="t" style="left:575.9px;top:128px;font-size:8.6px;color:#1c1c1c;transform:scaleX(0.870);">595</div>
<svg class="ab" style="left:231px;top:142.6px" width="11" height="11" viewBox="0 0 11 11"><defs><linearGradient id="pg1" x1="0" y1="0" x2="1" y2="1"><stop offset="0" stop-color="#7474e8"/><stop offset="1" stop-color="#4846be"/></linearGradient></defs><rect x="0" y="0" width="11" height="11" rx="2" fill="url(#pg1)"/><text x="5.6" y="7.2" font-size="5" font-family="Liberation Sans" font-weight="bold" font-style="italic" fill="#fff" text-anchor="middle" letter-spacing="-0.3">PDF</text></svg>
<div class="t" style="left:265.04px;top:143px;font-size:8.6px;color:#1c1c1c;transform:scaleX(0.960);">D:\bac…</div>
<div class="t" style="left:307.8px;top:143px;font-size:8.4px;color:#1c1c1c;-webkit-text-stroke:0.15px #1c1c1c;">一起</div>
<div class="t" style="left:325.0px;top:143px;font-size:8.6px;color:#1c1c1c;transform:scaleX(0.860);">…</div>
<div class="t" style="left:346.16px;top:143px;font-size:8.6px;color:#1c1c1c;transform:scaleX(0.790);">PDF</div>
<div class="t" style="left:362.2px;top:144px;font-size:8.1px;color:#1c1c1c;-webkit-text-stroke:0.15px #1c1c1c;">文件</div>
<div class="t" style="left:393.83px;top:143px;font-size:8.6px;color:#1c1c1c;transform:scaleX(0.860);">7,682.1…</div>
<div class="t" style="left:441.01px;top:143px;font-size:8.6px;color:#1c1c1c;transform:scaleX(0.910);">2018-08-1…</div>
<div class="t" style="left:495.5px;top:143px;font-size:8.6px;color:#1c1c1c;transform:scaleX(0.860);">58</div>
<div class="t" style="left:525.01px;top:143px;font-size:8.6px;color:#1c1c1c;transform:scaleX(0.850);">False</div>
<div class="t" style="left:575.9px;top:143px;font-size:8.6px;color:#1c1c1c;transform:scaleX(0.870);">595</div>
<svg class="ab" style="left:231px;top:157.9px" width="11" height="11" viewBox="0 0 11 11"><defs><linearGradient id="pg2" x1="0" y1="0" x2="1" y2="1"><stop offset="0" stop-color="#7474e8"/><stop offset="1" stop-color="#4846be"/></linearGradient></defs><rect x="0" y="0" width="11" height="11" rx="2" fill="url(#pg2)"/><text x="5.6" y="7.2" font-size="5" font-family="Liberation Sans" font-weight="bold" font-style="italic" fill="#fff" text-anchor="middle" letter-spacing="-0.3">PDF</text></svg>
<div class="t" style="left:265.04px;top:159px;font-size:8.6px;color:#1c1c1c;transform:scaleX(0.960);">D:\bac…</div>
<div class="t" style="left:307.8px;top:159px;font-size:8.4px;color:#1c1c1c;-webkit-text-stroke:0.15px #1c1c1c;">一起</div>
<div class="t" style="left:325.0px;top:159px;font-size:8.6px;color:#1c1c1c;transform:scaleX(0.860);">…</div>
<div class="t" style="left:346.16px;top:159px;font-size:8.6px;color:#1c1c1c;transform:scaleX(0.790);">PDF</div>
<div class="t" style="left:362.2px;top:160px;font-size:8.1px;color:#1c1c1c;-webkit-text-stroke:0.15px #1c1c1c;">文件</div>
<div class="t" style="left:393.9px;top:159px;font-size:8.6px;color:#1c1c1c;transform:scaleX(0.860);">5,177.7…</div>
<div class="t" style="left:441.01px;top:159px;font-size:8.6px;color:#1c1c1c;transform:scaleX(0.910);">2018-08-1…</div>
<div class="t" style="left:495.5px;top:159px;font-size:8.6px;color:#1c1c1c;transform:scaleX(0.860);">55</div>
<div class="t" style="left:525.44px;top:159px;font-size:8.6px;color:#1c1c1c;transform:scaleX(0.920);">True</div>
<div class="t" style="left:575.9px;top:159px;font-size:8.6px;color:#1c1c1c;transform:scaleX(0.870);">595</div>
<svg class="ab" style="left:231px;top:173.1px" width="11" height="11" viewBox="0 0 11 11"><defs><linearGradient id="pg3" x1="0" y1="0" x2="1" y2="1"><stop offset="0" stop-color="#7474e8"/><stop offset="1" stop-color="#4846be"/></linearGradient></defs><rect x="0" y="0" width="11" height="11" rx="2" fill="url(#pg3)"/><text x="5.6" y="7.2" font-size="5" font-family="Liberation Sans" font-weight="bold" font-style="italic" fill="#fff" text-anchor="middle" letter-spacing="-0.3">PDF</text></svg>
<div class="t" style="left:265.04px;top:174px;font-size:8.6px;color:#1c1c1c;transform:scaleX(0.960);">D:\bac…</div>
<div class="t" style="left:307.8px;top:174px;font-size:8.4px;color:#1c1c1c;-webkit-text-stroke:0.15px #1c1c1c;">一起</div>
<div class="t" style="left:325.0px;top:174px;font-size:8.6px;color:#1c1c1c;transform:scaleX(0.860);">…</div>
<div class="t" style="left:346.16px;top:174px;font-size:8.6px;color:#1c1c1c;transform:scaleX(0.790);">PDF</div>
<div class="t" style="left:362.2px;top:175px;font-size:8.1px;color:#1c1c1c;-webkit-text-stroke:0.15px #1c1c1c;">文件</div>
<div class="t" style="left:393.65px;top:174px;font-size:8.6px;color:#1c1c1c;transform:scaleX(0.860);">13,040.…</div>
<div class="t" style="left:441.01px;top:174px;font-size:8.6px;color:#1c1c1c;transform:scaleX(0.910);">2018-08-1…</div>
<div class="t" style="left:495.47px;top:174px;font-size:8.6px;color:#1c1c1c;transform:scaleX(0.860);">99</div>
<div class="t" style="left:525.44px;top:174px;font-size:8.6px;color:#1c1c1c;transform:scaleX(0.920);">True</div>
<div class="t" style="left:575.9px;top:174px;font-size:8.6px;color:#1c1c1c;transform:scaleX(0.870);">595</div>
<svg class="ab" style="left:231px;top:188.4px" width="11" height="11" viewBox="0 0 11 11"><defs><linearGradient id="pg4" x1="0" y1="0" x2="1" y2="1"><stop offset="0" stop-color="#7474e8"/><stop offset="1" stop-color="#4846be"/></linearGradient></defs><rect x="0" y="0" width="11" height="11" rx="2" fill="url(#pg4)"/><text x="5.6" y="7.2" font-size="5" font-family="Liberation Sans" font-weight="bold" font-style="italic" fill="#fff" text-anchor="middle" letter-spacing="-0.3">PDF</text></svg>
<div class="t" style="left:265.04px;top:189px;font-size:8.6px;color:#1c1c1c;transform:scaleX(0.960);">D:\bac…</div>
<div class="t" style="left:307.8px;top:189px;font-size:8.4px;color:#1c1c1c;-webkit-text-stroke:0.15px #1c1c1c;">一起</div>
<div class="t" style="left:325.0px;top:189px;font-size:8.6px;color:#1c1c1c;transform:scaleX(0.860);">…</div>
<div class="t" style="left:346.16px;top:189px;font-size:8.6px;color:#1c1c1c;transform:scaleX(0.790);">PDF</div>
<div class="t" style="left:362.2px;top:190px;font-size:8.1px;color:#1c1c1c;-webkit-text-stroke:0.15px #1c1c1c;">文件</div>
<div class="t" style="left:393.9px;top:189px;font-size:8.6px;color:#1c1c1c;transform:scaleX(0.860);">5,383.8…</div>
<div class="t" style="left:441.01px;top:189px;font-size:8.6px;color:#1c1c1c;transform:scaleX(0.910);">2018-09-1…</div>
<div class="t" style="left:495.25px;top:189px;font-size:8.6px;color:#1c1c1c;transform:scaleX(0.860);">11</div>
<div class="t" style="left:525.44px;top:189px;font-size:8.6px;color:#1c1c1c;transform:scaleX(0.920);">True</div>
<div class="t" style="left:575.9px;top:189px;font-size:8.6px;color:#1c1c1c;transform:scaleX(0.870);">595</div>
<svg class="ab" style="left:231px;top:203.7px" width="11" height="11" viewBox="0 0 11 11"><defs><linearGradient id="pg5" x1="0" y1="0" x2="1" y2="1"><stop offset="0" stop-color="#7474e8"/><stop offset="1" stop-color="#4846be"/></linearGradient></defs><rect x="0" y="0" width="11" height="11" rx="2" fill="url(#pg5)"/><text x="5.6" y="7.2" font-size="5" font-family="Liberation Sans" font-weight="bold" font-style="italic" fill="#fff" text-anchor="middle" letter-spacing="-0.3">PDF</text></svg>
<div class="t" style="left:265.04px;top:205px;font-size:8.6px;color:#1c1c1c;transform:scaleX(0.960);">D:\bac…</div>
<div class="t" style="left:307.8px;top:205px;font-size:8.4px;color:#1c1c1c;-webkit-text-stroke:0.15px #1c1c1c;">一起</div>
<div class="t" style="left:325.0px;top:205px;font-size:8.6px;color:#1c1c1c;transform:scaleX(0.860);">…</div>
<div class="t" style="left:346.16px;top:205px;font-size:8.6px;color:#1c1c1c;transform:scaleX(0.790);">PDF</div>
<div class="t" style="left:362.2px;top:206px;font-size:8.1px;color:#1c1c1c;-webkit-text-stroke:0.15px #1c1c1c;">文件</div>
<div class="t" style="left:393.83px;top:205px;font-size:8.6px;color:#1c1c1c;transform:scaleX(0.860);">7,065.6…</div>
<div class="t" style="left:441.01px;top:205px;font-size:8.6px;color:#1c1c1c;transform:scaleX(0.910);">2018-08-1…</div>
<div class="t" style="left:495.43px;top:205px;font-size:8.6px;color:#1c1c1c;transform:scaleX(0.860);">71</div>
<div class="t" style="left:525.44px;top:205px;font-size:8.6px;color:#1c1c1c;transform:scaleX(0.920);">True</div>
<div class="t" style="left:575.9px;top:205px;font-size:8.6px;color:#1c1c1c;transform:scaleX(0.870);">595</div>
<svg class="ab" style="left:231px;top:219.0px" width="11" height="11" viewBox="0 0 11 11"><defs><linearGradient id="pg6" x1="0" y1="0" x2="1" y2="1"><stop offset="0" stop-color="#7474e8"/><stop offset="1" stop-color="#4846be"/></linearGradient></defs><rect x="0" y="0" width="11" height="11" rx="2" fill="url(#pg6)"/><text x="5.6" y="7.2" font-size="5" font-family="Liberation Sans" font-weight="bold" font-style="italic" fill="#fff" text-anchor="middle" letter-spacing="-0.3">PDF</text></svg>
<div class="t" style="left:265.04px;top:220px;font-size:8.6px;color:#1c1c1c;transform:scaleX(0.960);">D:\bac…</div>
<div class="t" style="left:307.8px;top:220px;font-size:8.4px;color:#1c1c1c;-webkit-text-stroke:0.15px #1c1c1c;">一起</div>
<div class="t" style="left:325.0px;top:220px;font-size:8.6px;color:#1c1c1c;transform:scaleX(0.860);">…</div>
<div class="t" style="left:346.16px;top:220px;font-size:8.6px;color:#1c1c1c;transform:scaleX(0.790);">PDF</div>
<div class="t" style="left:362.2px;top:221px;font-size:8.1px;color:#1c1c1c;-webkit-text-stroke:0.15px #1c1c1c;">文件</div>
<div class="t" style="left:393.9px;top:220px;font-size:8.6px;color:#1c1c1c;transform:scaleX(0.860);">3,965.9…</div>
<div class="t" style="left:441.01px;top:220px;font-size:8.6px;color:#1c1c1c;transform:scaleX(0.910);">2018-08-1…</div>
<div class="t" style="left:495.5px;top:220px;font-size:8.6px;color:#1c1c1c;transform:scaleX(0.860);">32</div>
<div class="t" style="left:525.01px;top:220px;font-size:8.6px;color:#1c1c1c;transform:scaleX(0.850);">False</div>
<div class="t" style="left:575.9px;top:220px;font-size:8.6px;color:#1c1c1c;transform:scaleX(0.870);">595</div>
<div class="ab" style="left:214px;top:466.5px;width:432px;height:10px;background:#fff"></div>
<svg class="ab" style="left:221px;top:468px" width="5" height="8"><path d="M4 0.5 L1 4 L4 7.5" stroke="#555" stroke-width="1" fill="none"/></svg>
<div class="ab" style="left:229px;top:467px;width:290px;height:9.5px;background:#c2c2c2"></div>
<div class="ab" style="left:214px;top:476.5px;width:432px;height:1px;background:#e3e3e3"></div>
<div class="ab" style="left:647px;top:112px;width:1px;height:365.5px;background:#e0e0e0"></div>
<div class="ab" style="left:745px;top:112px;width:1px;height:365.5px;background:#e0e0e0"></div>
<div class="ab" style="left:647px;top:112px;width:99px;height:1px;background:#e8e8e8"></div>
<div class="ab" style="left:647px;top:477px;width:99px;height:1px;background:#e0e0e0"></div>
<div class="ab" style="left:655px;top:123px;width:0;height:112.22px;border-left:1px solid #cfcfcf"></div>
<div class="ab" style="left:655px;top:242.72px;width:0;height:216.55999999999997px;border-left:1px solid #cfcfcf"></div>
<div class="ab" style="left:667px;top:126px;width:0;height:99.44px;border-left:1px solid #d6d6d6"></div>
<div class="ab" style="left:667px;top:244.22px;width:0;height:205.88px;border-left:1px solid #d6d6d6"></div>
<svg class="ab" style="left:652px;top:115px" width="8" height="8" viewBox="0 0 8 8"><rect x="0.5" y="0.5" width="7" height="7" fill="#fff" stroke="#9c9c9c"/><path d="M1 3.5 H7" stroke="#6a6a6a"/></svg>
<svg class="ab" style="left:664px;top:115.6px" width="10.5" height="10.5" viewBox="0 0 10.5 10.5"><rect x="0" y="0" width="10.5" height="10.5" fill="#1f6fbf"/><path d="M2 5.3 L4.3 7.6 L8.6 2.8" stroke="#fff" stroke-width="1.3" fill="none"/></svg>
<div class="t" style="left:679.64px;top:116px;font-size:8.6px;font-weight:bold;color:#1c1c1c;transform:scaleX(1.000);">Default</div>
<div class="ab" style="left:667px;top:133.8px;width:9px;height:0;border-top:1px solid #d6d6d6"></div>
<svg class="ab" style="left:676.3px;top:128.8px" width="10.5" height="10.5" viewBox="0 0 10.5 10.5"><rect x="0" y="0" width="10.5" height="10.5" fill="#1f6fbf"/><path d="M2 5.3 L4.3 7.6 L8.6 2.8" stroke="#fff" stroke-width="1.3" fill="none"/></svg>
<div class="t" style="left:691.64px;top:129px;font-size:8.6px;color:#1c1c1c;transform:scaleX(0.830);">Create date</div>
<div class="ab" style="left:667px;top:147.0px;width:9px;height:0;border-top:1px solid #d6d6d6"></div>
<svg class="ab" style="left:676.3px;top:142.0px" width="10.5" height="10.5" viewBox="0 0 10.5 10.5"><rect x="0" y="0" width="10.5" height="10.5" fill="#1f6fbf"/><path d="M2 5.3 L4.3 7.6 L8.6 2.8" stroke="#fff" stroke-width="1.3" fill="none"/></svg>
<div class="t" style="left:691.4px;top:142px;font-size:8.6px;color:#1c1c1c;transform:scaleX(0.870);">File icon</div>
<div class="ab" style="left:667px;top:160.1px;width:9px;height:0;border-top:1px solid #d6d6d6"></div>
<svg class="ab" style="left:676.3px;top:155.1px" width="10.5" height="10.5" viewBox="0 0 10.5 10.5"><rect x="0" y="0" width="10.5" height="10.5" fill="#1f6fbf"/><path d="M2 5.3 L4.3 7.6 L8.6 2.8" stroke="#fff" stroke-width="1.3" fill="none"/></svg>
<div class="t" style="left:691.4px;top:155px;font-size:8.6px;color:#1c1c1c;transform:scaleX(0.870);">File name</div>
<div class="ab" style="left:667px;top:173.3px;width:9px;height:0;border-top:1px solid #d6d6d6"></div>
<svg class="ab" style="left:676.3px;top:168.3px" width="10.5" height="10.5" viewBox="0 0 10.5 10.5"><rect x="0" y="0" width="10.5" height="10.5" fill="#1f6fbf"/><path d="M2 5.3 L4.3 7.6 L8.6 2.8" stroke="#fff" stroke-width="1.3" fill="none"/></svg>
<div class="t" style="left:691.4px;top:168px;font-size:8.6px;color:#1c1c1c;transform:scaleX(0.870);">File path</div>
<div class="ab" style="left:667px;top:186.5px;width:9px;height:0;border-top:1px solid #d6d6d6"></div>
<svg class="ab" style="left:676.3px;top:181.5px" width="10.5" height="10.5" viewBox="0 0 10.5 10.5"><rect x="0" y="0" width="10.5" height="10.5" fill="#1f6fbf"/><path d="M2 5.3 L4.3 7.6 L8.6 2.8" stroke="#fff" stroke-width="1.3" fill="none"/></svg>
<div class="t" style="left:691.4px;top:181px;font-size:8.6px;color:#1c1c1c;transform:scaleX(0.870);">File size</div>
<div class="ab" style="left:667px;top:199.7px;width:9px;height:0;border-top:1px solid #d6d6d6"></div>
<svg class="ab" style="left:676.3px;top:194.7px" width="10.5" height="10.5" viewBox="0 0 10.5 10.5"><rect x="0" y="0" width="10.5" height="10.5" fill="#1f6fbf"/><path d="M2 5.3 L4.3 7.6 L8.6 2.8" stroke="#fff" stroke-width="1.3" fill="none"/></svg>
<div class="t" style="left:691.4px;top:194px;font-size:8.6px;color:#1c1c1c;transform:scaleX(0.870);">File type</div>
<div class="ab" style="left:667px;top:212.9px;width:9px;height:0;border-top:1px solid #d6d6d6"></div>
<svg class="ab" style="left:676.3px;top:207.9px" width="10.5" height="10.5" viewBox="0 0 10.5 10.5"><rect x="0.5" y="0.5" width="9.5" height="9.5" fill="#fff" stroke="#c4c4c4"/></svg>
<div class="t" style="left:691.4px;top:208px;font-size:8.6px;color:#1c1c1c;transform:scaleX(0.870);">Modify date</div>
<div class="ab" style="left:667px;top:226.0px;width:9px;height:0;border-top:1px solid #d6d6d6"></div>
<svg class="ab" style="left:676.3px;top:221.0px" width="10.5" height="10.5" viewBox="0 0 10.5 10.5"><rect x="0.5" y="0.5" width="9.5" height="9.5" fill="#fff" stroke="#c4c4c4"/></svg>
<div class="t" style="left:691.66px;top:221px;font-size:8.6px;color:#1c1c1c;transform:scaleX(0.870);">Owner</div>
<svg class="ab" style="left:652px;top:234px" width="8" height="8" viewBox="0 0 8 8"><rect x="0.5" y="0.5" width="7" height="7" fill="#fff" stroke="#9c9c9c"/><path d="M1 3.5 H7" stroke="#6a6a6a"/></svg>
<svg class="ab" style="left:664px;top:234.2px" width="10.5" height="10.5" viewBox="0 0 10.5 10.5"><rect x="0.5" y="0.5" width="9.5" height="9.5" fill="#e2f0fb" stroke="#7d93a8"/><rect x="2.8" y="2.8" width="5" height="5" fill="#1f5fae"/></svg>
<div class="t" style="left:679.66px;top:234px;font-size:8.6px;font-weight:bold;color:#1c1c1c;transform:scaleX(0.960);">Document</div>
<div class="ab" style="left:667px;top:252.4px;width:9px;height:0;border-top:1px solid #d6d6d6"></div>
<svg class="ab" style="left:676.3px;top:247.4px" width="10.5" height="10.5" viewBox="0 0 10.5 10.5"><rect x="0.5" y="0.5" width="9.5" height="9.5" fill="#fff" stroke="#c4c4c4"/></svg>
<div class="t" style="left:692.0px;top:247px;font-size:8.6px;color:#1c1c1c;transform:scaleX(0.870);">All paper na</div>
<div class="ab" style="left:667px;top:265.6px;width:9px;height:0;border-top:1px solid #d6d6d6"></div>
<svg class="ab" style="left:676.3px;top:260.6px" width="10.5" height="10.5" viewBox="0 0 10.5 10.5"><rect x="0.5" y="0.5" width="9.5" height="9.5" fill="#fff" stroke="#c4c4c4"/></svg>
<div class="t" style="left:692.0px;top:260px;font-size:8.6px;color:#1c1c1c;transform:scaleX(0.870);">All paper siz</div>
<div class="ab" style="left:667px;top:278.8px;width:9px;height:0;border-top:1px solid #d6d6d6"></div>
<svg class="ab" style="left:676.3px;top:273.8px" width="10.5" height="10.5" viewBox="0 0 10.5 10.5"><rect x="0.5" y="0.5" width="9.5" height="9.5" fill="#fff" stroke="#c4c4c4"/></svg>
<div class="t" style="left:692.0px;top:274px;font-size:8.6px;color:#1c1c1c;transform:scaleX(0.870);">Author</div>
<div class="ab" style="left:667px;top:291.9px;width:9px;height:0;border-top:1px solid #d6d6d6"></div>
<svg class="ab" style="left:676.3px;top:286.9px" width="10.5" height="10.5" viewBox="0 0 10.5 10.5"><rect x="0.5" y="0.5" width="9.5" height="9.5" fill="#fff" stroke="#c4c4c4"/></svg>
<div class="t" style="left:691.63px;top:287px;font-size:8.6px;color:#1c1c1c;transform:scaleX(0.870);">Comments</div>
<div class="ab" style="left:667px;top:305.1px;width:9px;height:0;border-top:1px solid #d6d6d6"></div>
<svg class="ab" style="left:676.3px;top:300.1px" width="10.5" height="10.5" viewBox="0 0 10.5 10.5"><rect x="0.5" y="0.5" width="9.5" height="9.5" fill="#fff" stroke="#c4c4c4"/></svg>
<div class="t" style="left:691.63px;top:300px;font-size:8.6px;color:#1c1c1c;transform:scaleX(0.870);">Creator</div>
<div class="ab" style="left:667px;top:318.3px;width:9px;height:0;border-top:1px solid #d6d6d6"></div>
<svg class="ab" style="left:676.3px;top:313.3px" width="10.5" height="10.5" viewBox="0 0 10.5 10.5"><rect x="0" y="0" width="10.5" height="10.5" fill="#1f6fbf"/><path d="M2 5.3 L4.3 7.6 L8.6 2.8" stroke="#fff" stroke-width="1.3" fill="none"/></svg>
<div class="t" style="left:691.4px;top:313px;font-size:8.6px;color:#1c1c1c;transform:scaleX(0.870);">First page he</div>
<div class="ab" style="left:667px;top:331.5px;width:9px;height:0;border-top:1px solid #d6d6d6"></div>
<svg class="ab" style="left:676.3px;top:326.5px" width="10.5" height="10.5" viewBox="0 0 10.5 10.5"><rect x="0" y="0" width="10.5" height="10.5" fill="#1f6fbf"/><path d="M2 5.3 L4.3 7.6 L8.6 2.8" stroke="#fff" stroke-width="1.3" fill="none"/></svg>
<div class="t" style="left:691.4px;top:326px;font-size:8.6px;color:#1c1c1c;transform:scaleX(0.870);">First page w</div>
<div class="ab" style="left:667px;top:344.7px;width:9px;height:0;border-top:1px solid #d6d6d6"></div>
<svg class="ab" style="left:676.3px;top:339.7px" width="10.5" height="10.5" viewBox="0 0 10.5 10.5"><rect x="0" y="0" width="10.5" height="10.5" fill="#1f6fbf"/><path d="M2 5.3 L4.3 7.6 L8.6 2.8" stroke="#fff" stroke-width="1.3" fill="none"/></svg>
<div class="t" style="left:691.4px;top:339px;font-size:8.6px;color:#1c1c1c;transform:scaleX(0.870);">Keywords</div>
<div class="ab" style="left:667px;top:357.8px;width:9px;height:0;border-top:1px solid #d6d6d6"></div>
<svg class="ab" style="left:676.3px;top:352.8px" width="10.5" height="10.5" viewBox="0 0 10.5 10.5"><rect x="0.5" y="0.5" width="9.5" height="9.5" fill="#fff" stroke="#c4c4c4"/></svg>
<div class="t" style="left:691.4px;top:353px;font-size:8.6px;color:#1c1c1c;transform:scaleX(0.870);">Max page he</div>
<div class="ab" style="left:667px;top:371.0px;width:9px;height:0;border-top:1px solid #d6d6d6"></div>
<svg class="ab" style="left:676.3px;top:366.0px" width="10.5" height="10.5" viewBox="0 0 10.5 10.5"><rect x="0.5" y="0.5" width="9.5" height="9.5" fill="#fff" stroke="#c4c4c4"/></svg>
<div class="t" style="left:691.4px;top:366px;font-size:8.6px;color:#1c1c1c;transform:scaleX(0.870);">Max page w</div>
<div class="ab" style="left:667px;top:384.2px;width:9px;height:0;border-top:1px solid #d6d6d6"></div>
<svg class="ab" style="left:676.3px;top:379.2px" width="10.5" height="10.5" viewBox="0 0 10.5 10.5"><rect x="0.5" y="0.5" width="9.5" height="9.5" fill="#fff" stroke="#c4c4c4"/></svg>
<div class="t" style="left:691.4px;top:379px;font-size:8.6px;color:#1c1c1c;transform:scaleX(0.870);">Min page he</div>
<div class="ab" style="left:667px;top:397.4px;width:9px;height:0;border-top:1px solid #d6d6d6"></div>
<svg class="ab" style="left:676.3px;top:392.4px" width="10.5" height="10.5" viewBox="0 0 10.5 10.5"><rect x="0.5" y="0.5" width="9.5" height="9.5" fill="#fff" stroke="#c4c4c4"/></svg>
<div class="t" style="left:691.4px;top:392px;font-size:8.6px;color:#1c1c1c;transform:scaleX(0.870);">Min page wid</div>
<div class="ab" style="left:667px;top:410.6px;width:9px;height:0;border-top:1px solid #d6d6d6"></div>
<svg class="ab" style="left:676.3px;top:405.6px" width="10.5" height="10.5" viewBox="0 0 10.5 10.5"><rect x="0" y="0" width="10.5" height="10.5" fill="#1f6fbf"/><path d="M2 5.3 L4.3 7.6 L8.6 2.8" stroke="#fff" stroke-width="1.3" fill="none"/></svg>
<div class="t" style="left:691.66px;top:405px;font-size:8.6px;color:#1c1c1c;transform:scaleX(0.870);">Odd pages</div>
<div class="ab" style="left:667px;top:423.7px;width:9px;height:0;border-top:1px solid #d6d6d6"></div>
<svg class="ab" style="left:676.3px;top:418.7px" width="10.5" height="10.5" viewBox="0 0 10.5 10.5"><rect x="0" y="0" width="10.5" height="10.5" fill="#1f6fbf"/><path d="M2 5.3 L4.3 7.6 L8.6 2.8" stroke="#fff" stroke-width="1.3" fill="none"/></svg>
<div class="t" style="left:691.4px;top:419px;font-size:8.6px;color:#1c1c1c;transform:scaleX(0.870);">Page count</div>
<div class="ab" style="left:667px;top:436.9px;width:9px;height:0;border-top:1px solid #d6d6d6"></div>
<svg class="ab" style="left:676.3px;top:431.9px" width="10.5" height="10.5" viewBox="0 0 10.5 10.5"><rect x="0" y="0" width="10.5" height="10.5" fill="#1f6fbf"/><path d="M2 5.3 L4.3 7.6 L8.6 2.8" stroke="#fff" stroke-width="1.3" fill="none"/></svg>
<div class="t" style="left:691.66px;top:432px;font-size:8.6px;color:#1c1c1c;transform:scaleX(0.870);">Subject</div>
<div class="ab" style="left:667px;top:450.1px;width:9px;height:0;border-top:1px solid #d6d6d6"></div>
<svg class="ab" style="left:676.3px;top:445.1px" width="10.5" height="10.5" viewBox="0 0 10.5 10.5"><rect x="0" y="0" width="10.5" height="10.5" fill="#1f6fbf"/><path d="M2 5.3 L4.3 7.6 L8.6 2.8" stroke="#fff" stroke-width="1.3" fill="none"/></svg>
<div class="t" style="left:691.85px;top:445px;font-size:8.6px;color:#1c1c1c;transform:scaleX(0.870);">Title</div>
<svg class="ab" style="left:652px;top:458px" width="8" height="8" viewBox="0 0 8 8"><rect x="0.5" y="0.5" width="7" height="7" fill="#fff" stroke="#9c9c9c"/><path d="M1 3.5 H7" stroke="#6a6a6a"/></svg>
<svg class="ab" style="left:664px;top:458.3px" width="10.5" height="10.5" viewBox="0 0 10.5 10.5"><rect x="0.5" y="0.5" width="9.5" height="9.5" fill="#e2f0fb" stroke="#7d93a8"/><rect x="2.8" y="2.8" width="5" height="5" fill="#1f5fae"/></svg>
<div class="t" style="left:679.69px;top:458px;font-size:8.6px;font-weight:bold;color:#1c1c1c;transform:scaleX(0.910);">Reading</div>
<div class="ab" style="left:732px;top:113px;width:13px;height:353px;background:#fff"></div>
<div class="ab" style="left:733.5px;top:125px;width:10px;height:178px;background:#c2c2c2"></div>
<svg class="ab" style="left:734.5px;top:117px" width="8" height="5"><path d="M0.5 4.5 L4 1 L7.5 4.5" stroke="#555" stroke-width="1" fill="none"/></svg>
<svg class="ab" style="left:734.5px;top:456px" width="8" height="5"><path d="M0.5 0.5 L4 4 L7.5 0.5" stroke="#555" stroke-width="1" fill="none"/></svg>
<div class="ab" style="left:648px;top:466px;width:97px;height:11px;background:#fff"></div>
<div class="ab" style="left:660px;top:466.5px;width:35.5px;height:10px;background:#c2c2c2"></div>
<div class="t" style="left:7.77px;top:482px;font-size:8.6px;color:#1c1c1c;transform:scaleX(0.910);">Files:</div>
<div class="t" style="left:33.23px;top:482px;font-size:8.6px;color:#1c1c1c;transform:scaleX(0.860);">7</div>
<div class="t" style="left:48.26px;top:482px;font-size:8.6px;color:#1c1c1c;transform:scaleX(0.930);">PDF files/pages:</div>
<div class="t" style="left:120.54px;top:482px;font-size:8.6px;color:#1c1c1c;transform:scaleX(1.060);">7/328</div>
<div class="t" style="left:151.34px;top:482px;font-size:8.6px;color:#1c1c1c;transform:scaleX(0.920);">TIFF files/pages:</div>
<div class="t" style="left:231.63px;top:482px;font-size:8.6px;color:#1c1c1c;transform:scaleX(1.060);">0/0</div>
<div class="ab" style="left:43px;top:481px;width:1px;height:13px;background:#cfcfcf"></div>
<div class="ab" style="left:145.5px;top:481px;width:1px;height:13px;background:#cfcfcf"></div>
<div class="ab" style="left:248.5px;top:481px;width:1px;height:13px;background:#cfcfcf"></div>
<svg class="ab" style="left:736px;top:484px" width="9" height="9" viewBox="0 0 9 9"><rect x="6" y="1.5" width="1.1" height="1.1" fill="#8a8a8a"/><rect x="6" y="4" width="1.1" height="1.1" fill="#8a8a8a"/><rect x="3.5" y="4" width="1.1" height="1.1" fill="#8a8a8a"/><rect x="6" y="6.5" width="1.1" height="1.1" fill="#8a8a8a"/><rect x="3.5" y="6.5" width="1.1" height="1.1" fill="#8a8a8a"/><rect x="1" y="6.5" width="1.1" height="1.1" fill="#8a8a8a"/></svg>
<svg class="ab" style="left:565px;top:446px" width="180" height="46" viewBox="0 0 180 46"><defs><linearGradient id="wm" x1="0" y1="0" x2="0" y2="1"><stop offset="0.15" stop-color="#62a8de"/><stop offset="0.9" stop-color="#4868a6"/></linearGradient></defs><text x="10.5" y="35.3" font-size="31" font-weight="400" fill="none" stroke="#fff" stroke-opacity="0.6" stroke-width="2.6" stroke-linejoin="round" letter-spacing="0.2">极速下载站</text><text x="10.5" y="35.3" font-size="31" font-weight="400" fill="url(#wm)" stroke="url(#wm)" stroke-width="0.6" letter-spacing="0.2">极速下载站</text></svg></body></html>
